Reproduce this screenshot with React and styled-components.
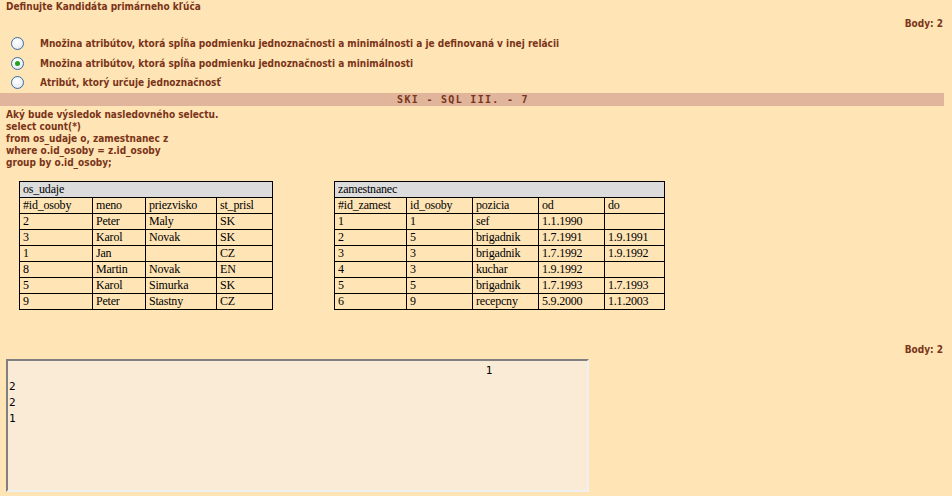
import React from 'react';
import styled, { createGlobalStyle } from 'styled-components';

const GlobalStyle = createGlobalStyle`
  html, body {
    margin: 0;
    padding: 0;
    background: #ffe4b5;
  }
`;

const Page = styled.div`
  width: 952px;
  min-height: 496px;
  background: #ffe4b5;
  color: #7a3419;
  font-family: 'DejaVu Sans Condensed', 'DejaVu Sans', sans-serif;
  font-weight: bold;
  font-size: 10px;
`;

const Block = styled.div`
  padding: 0 6px;
`;

const Title = styled.div`
  height: 14px;
  line-height: 14px;
`;

const Points = styled.div`
  text-align: right;
  padding-right: 9px;
  height: ${(p) => p.$h || 16}px;
  line-height: 16px;
  margin-top: ${(p) => p.$mt || 0}px;
`;

const Options = styled.div`
  display: flex;
  flex-direction: column;
  padding-top: 2px;
`;

const Option = styled.label`
  display: flex;
  align-items: center;
  height: 19.5px;
  gap: 16px;
  padding-left: 5px;
`;

const Radio = styled.span`
  box-sizing: border-box;
  width: 13px;
  height: 13px;
  border-radius: 50%;
  border: 1px solid #3a6ea5;
  background: radial-gradient(circle at 40% 35%, #ffffff 0%, #eef2f6 55%, #c9d3de 100%);
  display: flex;
  align-items: center;
  justify-content: center;
  margin-left: 6px;

  &::after {
    content: '';
    width: 5px;
    height: 5px;
    border-radius: 50%;
    background: ${(p) => (p.$checked ? '#21a121' : 'transparent')};
  }
`;

const Bar = styled.div`
  box-sizing: border-box;
  width: 944px;
  height: 13px;
  background: #e0b59b;
  text-align: center;
  padding-right: 18px;
  font-family: 'DejaVu Sans Mono', monospace;
  font-size: 10px;
  line-height: 13px;
  letter-spacing: 1.3px;
`;

const Question = styled.div`
  padding: 3px 6px 0;
  line-height: 12px;
  white-space: pre;
`;

const Tables = styled.div`
  display: flex;
  align-items: flex-start;
  gap: 61px;
  margin: 12px 0 0 19px;
`;

const DataTable = styled.table`
  border-collapse: collapse;
  table-layout: fixed;
  font-family: 'Liberation Serif', serif;
  font-weight: normal;
  font-size: 12px;
  letter-spacing: -0.2px;
  color: #000;

  td {
    border: 1px solid #000;
    height: 15px;
    padding: 0 3px;
    line-height: 15px;
    white-space: nowrap;
    overflow: hidden;
  }
`;

const HeadCell = styled.td`
  background: #dcdcdc;
`;

const Answer = styled.textarea`
  display: block;
  margin: 0 0 0 6px;
  width: 583px;
  height: 133px;
  box-sizing: border-box;
  background: #faebd7;
  border-style: solid;
  border-width: 2px;
  border-color: #808080 #f0f0f0 #f0f0f0 #808080;
  font-family: 'DejaVu Sans Mono', monospace;
  font-size: 11px;
  line-height: 16px;
  padding: 2px 1px;
  color: #000;
  resize: none;
  outline: none;
  overflow: hidden;
`;

const osUdaje = {
  name: 'os_udaje',
  widths: [73, 53, 71, 56],
  rows: [
    ['#id_osoby', 'meno', 'priezvisko', 'st_prisl'],
    ['2', 'Peter', 'Maly', 'SK'],
    ['3', 'Karol', 'Novak', 'SK'],
    ['1', 'Jan', '', 'CZ'],
    ['8', 'Martin', 'Novak', 'EN'],
    ['5', 'Karol', 'Simurka', 'SK'],
    ['9', 'Peter', 'Stastny', 'CZ'],
  ],
};

const zamestnanec = {
  name: 'zamestnanec',
  widths: [72, 66, 66, 66, 60],
  rows: [
    ['#id_zamest', 'id_osoby', 'pozicia', 'od', 'do'],
    ['1', '1', 'sef', '1.1.1990', ''],
    ['2', '5', 'brigadnik', '1.7.1991', '1.9.1991'],
    ['3', '3', 'brigadnik', '1.7.1992', '1.9.1992'],
    ['4', '3', 'kuchar', '1.9.1992', ''],
    ['5', '5', 'brigadnik', '1.7.1993', '1.7.1993'],
    ['6', '9', 'recepcny', '5.9.2000', '1.1.2003'],
  ],
};

function Relation({ data }) {
  return (
    <DataTable>
      <colgroup>
        {data.widths.map((w, i) => (
          <col key={i} style={{ width: w }} />
        ))}
      </colgroup>
      <tbody>
        <tr>
          <HeadCell colSpan={data.widths.length}>{data.name}</HeadCell>
        </tr>
        {data.rows.map((r, i) => (
          <tr key={i}>
            {r.map((c, j) => (
              <td key={j}>{c}</td>
            ))}
          </tr>
        ))}
      </tbody>
    </DataTable>
  );
}

const options = [
  'Množina atribútov, ktorá spĺňa podmienku jednoznačnosti a minimálnosti a je definovaná v inej relácii',
  'Množina atribútov, ktorá spĺňa podmienku jednoznačnosti a minimálnosti',
  'Atribút, ktorý určuje jednoznačnosť',
];

const answer = ' '.repeat(72) + '1\n2\n2\n1';

export default function App() {
  return (
    <Page>
      <GlobalStyle />
      <Block>
        <Title>Definujte Kandidáta primárneho kľúča</Title>
      </Block>
      <Points $mt={2}>Body: 2</Points>
      <Options>
        {options.map((o, i) => (
          <Option key={i}>
            <Radio $checked={i === 1} />
            {o}
          </Option>
        ))}
      </Options>
      <Bar>SKI - SQL III. - 7</Bar>
      <Question>
        {'Aký bude výsledok nasledovného selectu.\nselect count(*)\nfrom os_udaje o, zamestnanec z\nwhere o.id_osoby = z.id_osoby\ngroup by o.id_osoby;'}
      </Question>
      <Tables>
        <Relation data={osUdaje} />
        <Relation data={zamestnanec} />
      </Tables>
      <Points $mt={32} $h={17}>Body: 2</Points>
      <Answer readOnly value={answer} />
    </Page>
  );
}
